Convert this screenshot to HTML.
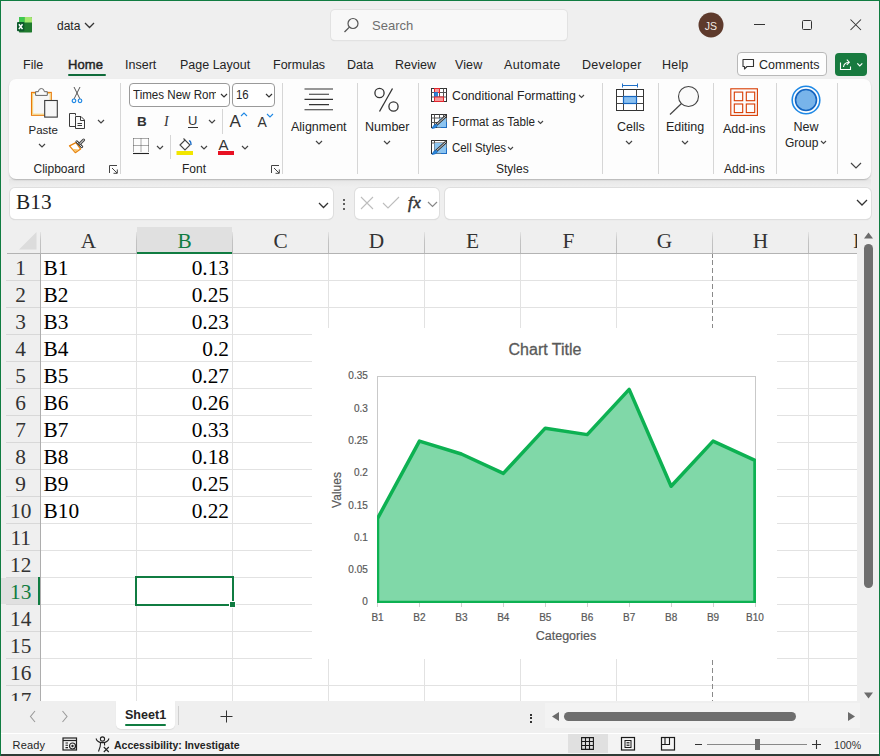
<!DOCTYPE html><html><head><meta charset="utf-8"><style>
html,body{margin:0;padding:0;}
body{width:880px;height:756px;overflow:hidden;position:relative;background:#efefef;font-family:"Liberation Sans",sans-serif;}
.t{position:absolute;white-space:nowrap;}
svg{overflow:visible}
</style></head><body>
<svg style="position:absolute;left:16px;top:16px;" width="18" height="18" viewBox="0 0 18 18">
<rect x="3" y="1" width="13" height="15.6" rx="1.2" fill="#1f7a2e"/>
<path d="M3 6.6 V2.2 Q3 1 4.2 1 H8.6 V6.6 Z" fill="#3ec94f"/>
<path d="M8.6 1 H14.8 Q16 1 16 2.2 V6.6 H8.6 Z" fill="#a6e871"/>
<path d="M3 1 h13 v5.6 h-13z" fill="none"/>
<rect x="1" y="6" width="7.4" height="9.3" rx="1" fill="#0e5a2d"/>
<path d="M2.9 8.3 L6.5 13.1 M6.5 8.3 L2.9 13.1" stroke="#fff" stroke-width="1.5"/>
</svg>
<div class="t" style="left:57px;top:20.44px;font-size:12px;line-height:13.80px;color:#242424;font-weight:400;font-family:'Liberation Sans', sans-serif;">data</div>
<svg style="position:absolute;left:83.5px;top:21.75px;" width="11" height="6.5" viewBox="0 0 11 6.5"><path d="M1 1 L5.5 5.5 L10 1" fill="none" stroke="#333" stroke-width="1.3"/></svg>
<div style="position:absolute;left:331px;top:10px;width:236px;height:30px;background:#f8f8f8;border-radius:4px;box-shadow:0 0 0 1px #e2e2e2, 0 1px 1px #d0d0d0;"></div>
<svg style="position:absolute;left:343px;top:17px;" width="17" height="17" viewBox="0 0 17 17"><circle cx="10" cy="6.5" r="5" fill="none" stroke="#555" stroke-width="1.2"/><path d="M6.4 10.1 L1.5 15" stroke="#555" stroke-width="1.3"/></svg>
<div class="t" style="left:372px;top:19.02px;font-size:13px;line-height:14.95px;color:#6e6e6e;font-weight:400;font-family:'Liberation Sans', sans-serif;">Search</div>
<svg style="position:absolute;left:698px;top:12px;" width="26" height="26" viewBox="0 0 26 26"><circle cx="13" cy="13" r="12.5" fill="#5e3a2c"/></svg>
<div class="t" style="left:411px;width:600px;text-align:center;top:20.32px;font-size:10.5px;line-height:12.07px;color:#f3ebe6;font-weight:400;font-family:'Liberation Sans', sans-serif;">JS</div>
<div style="position:absolute;left:754px;top:24px;width:11px;height:1px;background:#333"></div>
<div style="position:absolute;left:802px;top:20px;width:10px;height:10px;border:1px solid #333;box-sizing:border-box;border-radius:1.5px"></div>
<svg style="position:absolute;left:850px;top:19px;" width="12" height="12" viewBox="0 0 12 12"><path d="M0.5 0.5 L11 11 M11 0.5 L0.5 11" stroke="#333" stroke-width="1.05"/></svg>
<div class="t" style="left:23px;top:57.98px;font-size:12.5px;line-height:14.37px;color:#242424;font-weight:400;font-family:'Liberation Sans', sans-serif;letter-spacing:0px">File</div>
<div class="t" style="left:68px;top:57.52px;font-size:13px;line-height:14.95px;color:#242424;font-weight:400;font-family:'Liberation Sans', sans-serif;-webkit-text-stroke:0.45px #242424;letter-spacing:0.1px">Home</div>
<div class="t" style="left:125px;top:57.98px;font-size:12.5px;line-height:14.37px;color:#242424;font-weight:400;font-family:'Liberation Sans', sans-serif;letter-spacing:0px">Insert</div>
<div class="t" style="left:180px;top:57.98px;font-size:12.5px;line-height:14.37px;color:#242424;font-weight:400;font-family:'Liberation Sans', sans-serif;letter-spacing:0px">Page Layout</div>
<div class="t" style="left:273px;top:57.98px;font-size:12.5px;line-height:14.37px;color:#242424;font-weight:400;font-family:'Liberation Sans', sans-serif;letter-spacing:0px">Formulas</div>
<div class="t" style="left:347px;top:57.98px;font-size:12.5px;line-height:14.37px;color:#242424;font-weight:400;font-family:'Liberation Sans', sans-serif;letter-spacing:0px">Data</div>
<div class="t" style="left:395px;top:57.98px;font-size:12.5px;line-height:14.37px;color:#242424;font-weight:400;font-family:'Liberation Sans', sans-serif;letter-spacing:0px">Review</div>
<div class="t" style="left:455px;top:57.98px;font-size:12.5px;line-height:14.37px;color:#242424;font-weight:400;font-family:'Liberation Sans', sans-serif;letter-spacing:0.1px">View</div>
<div class="t" style="left:504px;top:57.98px;font-size:12.5px;line-height:14.37px;color:#242424;font-weight:400;font-family:'Liberation Sans', sans-serif;letter-spacing:0.4px">Automate</div>
<div class="t" style="left:582px;top:57.98px;font-size:12.5px;line-height:14.37px;color:#242424;font-weight:400;font-family:'Liberation Sans', sans-serif;letter-spacing:0.3px">Developer</div>
<div class="t" style="left:662px;top:57.98px;font-size:12.5px;line-height:14.37px;color:#242424;font-weight:400;font-family:'Liberation Sans', sans-serif;letter-spacing:0.2px">Help</div>
<div style="position:absolute;left:68px;top:74px;width:38px;height:2px;background:#0f6b3a;border-radius:1px"></div>
<div style="position:absolute;left:737px;top:52px;width:90px;height:24px;background:#fdfdfd;border:1px solid #b8b8b8;border-radius:4px;box-sizing:border-box"></div>
<svg style="position:absolute;left:742px;top:58px;" width="13" height="13" viewBox="0 0 13 13"><path d="M1 1.5 H11.5 V8.5 H5 L2.5 11 V8.5 H1 Z" fill="none" stroke="#333" stroke-width="1.1" stroke-linejoin="round"/></svg>
<div class="t" style="left:759px;top:57.98px;font-size:12.5px;line-height:14.37px;color:#242424;font-weight:400;font-family:'Liberation Sans', sans-serif;">Comments</div>
<div style="position:absolute;left:835px;top:53px;width:32px;height:23px;background:#187a3f;border-radius:4px"></div>
<svg style="position:absolute;left:839px;top:57px;" width="26" height="14" viewBox="0 0 26 14"><path d="M1.5 5.5 V12.5 H11.5 V9.5" fill="none" stroke="#fff" stroke-width="1.1"/><path d="M4.5 10 Q5 5.5 10 5.2" fill="none" stroke="#fff" stroke-width="1.1"/><path d="M7.8 2.6 L10.3 5.2 L7.8 7.8" fill="none" stroke="#fff" stroke-width="1.1"/><path d="M18.3 6.3 L20.8 8.8 L23.3 6.3" fill="none" stroke="#fff" stroke-width="1.2"/></svg>
<div style="position:absolute;left:9px;top:179px;width:862px;height:8px;background:linear-gradient(#e6e6e6,#efefef)"></div>
<div style="position:absolute;left:9px;top:79px;width:862px;height:100px;background:#fdfdfd;border-radius:7px;box-shadow:0 1px 1.5px rgba(0,0,0,0.22)"></div>
<div style="position:absolute;left:120px;top:83px;width:1px;height:91px;background:#d6d6d6"></div>
<div style="position:absolute;left:282px;top:83px;width:1px;height:91px;background:#d6d6d6"></div>
<div style="position:absolute;left:357px;top:83px;width:1px;height:91px;background:#d6d6d6"></div>
<div style="position:absolute;left:418px;top:83px;width:1px;height:91px;background:#d6d6d6"></div>
<div style="position:absolute;left:602px;top:83px;width:1px;height:91px;background:#d6d6d6"></div>
<div style="position:absolute;left:658px;top:83px;width:1px;height:91px;background:#d6d6d6"></div>
<div style="position:absolute;left:713px;top:83px;width:1px;height:91px;background:#d6d6d6"></div>
<div style="position:absolute;left:776px;top:83px;width:1px;height:91px;background:#d6d6d6"></div>
<div style="position:absolute;left:837px;top:83px;width:1px;height:91px;background:#d6d6d6"></div>
<svg style="position:absolute;left:30px;top:87px;" width="30" height="32" viewBox="0 0 30 32">
<rect x="1.5" y="5.4" width="19.8" height="22.9" fill="#f7f7f7" stroke="#e8780a" stroke-width="1.1"/>
<path d="M2.6 27.2 V6.5 H20.2 V13" fill="none" stroke="#f5d27a" stroke-width="1.1"/>
<path d="M2.6 27.2 H14" fill="none" stroke="#f5d27a" stroke-width="1.1"/>
<path d="M5.6 8.4 V4.7 H8.3 Q8.6 1.5 11.35 1.5 Q14.1 1.5 14.4 4.7 H17.3 V8.4 Z" fill="#fbfbfb" stroke="#666" stroke-width="1"/>
<rect x="14.7" y="13.5" width="12.6" height="16.6" fill="#f7f7f7" stroke="#3a3a3a" stroke-width="1.1"/>
</svg>
<div class="t" style="left:28.5px;top:123.90px;font-size:11.5px;line-height:13.22px;color:#242424;font-weight:400;font-family:'Liberation Sans', sans-serif;">Paste</div>
<svg style="position:absolute;left:37.5px;top:143.0px;" width="8" height="5" viewBox="0 0 8 5"><path d="M1 1 L4.0 4 L7 1" fill="none" stroke="#444" stroke-width="1.2"/></svg>
<svg style="position:absolute;left:70px;top:86px;" width="14" height="18" viewBox="0 0 14 18">
<path d="M4 13 L10 1 M10 13 L4 1" stroke="#555" stroke-width="1"/>
<circle cx="4" cy="14.8" r="1.8" fill="none" stroke="#1e88e5" stroke-width="1.2"/>
<circle cx="10" cy="14.8" r="1.8" fill="none" stroke="#1e88e5" stroke-width="1.2"/>
</svg>
<svg style="position:absolute;left:68px;top:111px;" width="19" height="19" viewBox="0 0 19 19">
<path d="M7.5 4.5 V2.5 H1.5 V15.5 H7" fill="none" stroke="#3a3a3a" stroke-width="1"/>
<path d="M7.5 5.5 H13 L16.5 9 V17.5 H7.5 Z" fill="#fafafa" stroke="#3a3a3a" stroke-width="1"/>
<path d="M12.5 5.5 V9.5 H16.5" fill="none" stroke="#3a3a3a" stroke-width="1"/>
<path d="M9.5 12.5 H14 M9.5 14.5 H14" stroke="#3a3a3a" stroke-width="1"/>
</svg>
<svg style="position:absolute;left:96.5px;top:119.0px;" width="8" height="5" viewBox="0 0 8 5"><path d="M1 1 L4.0 4 L7 1" fill="none" stroke="#444" stroke-width="1.2"/></svg>
<svg style="position:absolute;left:68px;top:138px;" width="18" height="17" viewBox="0 0 18 17">
<path d="M8 4.6 L1.5 7.8 L7.3 14.6 L12.6 11 Z" fill="#fff" stroke="#e8820c" stroke-width="1.3" stroke-linejoin="round"/>
<path d="M4.2 10.8 L7.4 14 L11 11.6 Z" fill="#f8c46a"/>
<path d="M8.8 3.8 L13.8 8.8" stroke="#444" stroke-width="2.8" stroke-linecap="round"/>
<path d="M8.8 3.8 L13.8 8.8" stroke="#fff" stroke-width="0.9" stroke-linecap="round"/>
<path d="M11.8 5.8 L15.6 2" stroke="#444" stroke-width="3" stroke-linecap="round"/>
<path d="M11.8 5.8 L15.6 2" stroke="#fff" stroke-width="1" stroke-linecap="round"/>
</svg>
<div class="t" style="left:33.5px;top:162.94px;font-size:12px;line-height:13.80px;color:#242424;font-weight:400;font-family:'Liberation Sans', sans-serif;">Clipboard</div>
<svg style="position:absolute;left:109px;top:165px;" width="9" height="9" viewBox="0 0 9 9"><path d="M0.5 0.5 H8.5 V8.5 H0.5 Z" fill="none" stroke="#555" stroke-width="0"/><path d="M0.5 8 V0.5 H8" fill="none" stroke="#444" stroke-width="1"/><path d="M3 3 L8 8 M4.5 8.3 H8.3 V4.5" fill="none" stroke="#444" stroke-width="1"/></svg>
<div style="position:absolute;left:129px;top:83px;width:101px;height:24px;background:#fff;border:1px solid #9a9a9a;border-radius:4px;box-sizing:border-box"></div>
<div class="t" style="left:133px;top:89.44px;font-size:12px;line-height:13.80px;color:#242424;font-weight:400;font-family:'Liberation Sans', sans-serif;width:86px;overflow:hidden;transform:scaleX(0.965);transform-origin:0 0;">Times New Roman</div>
<svg style="position:absolute;left:219.5px;top:93.0px;" width="8" height="5" viewBox="0 0 8 5"><path d="M1 1 L4.0 4 L7 1" fill="none" stroke="#333" stroke-width="1.2"/></svg>
<div style="position:absolute;left:232px;top:83px;width:43px;height:24px;background:#fff;border:1px solid #9a9a9a;border-radius:4px;box-sizing:border-box"></div>
<div class="t" style="left:235.5px;top:89.44px;font-size:12px;line-height:13.80px;color:#242424;font-weight:400;font-family:'Liberation Sans', sans-serif;transform:scaleX(0.95);transform-origin:0 0;">16</div>
<svg style="position:absolute;left:264.5px;top:93.0px;" width="8" height="5" viewBox="0 0 8 5"><path d="M1 1 L4.0 4 L7 1" fill="none" stroke="#333" stroke-width="1.2"/></svg>
<div class="t" style="left:137px;top:114.06px;font-size:13.5px;line-height:15.52px;color:#333;font-weight:700;font-family:'Liberation Sans', sans-serif;">B</div>
<div class="t" style="left:164px;top:113.72px;font-size:14px;line-height:16.10px;color:#333;font-weight:400;font-family:'Liberation Serif', serif;font-style:italic">I</div>
<div class="t" style="left:188px;top:113.52px;font-size:13px;line-height:14.95px;color:#333;font-weight:400;font-family:'Liberation Sans', sans-serif;">U</div>
<div style="position:absolute;left:187.5px;top:127px;width:10px;height:1px;background:#333"></div>
<svg style="position:absolute;left:207.5px;top:118.5px;" width="8" height="5" viewBox="0 0 8 5"><path d="M1 1 L4.0 4 L7 1" fill="none" stroke="#444" stroke-width="1.2"/></svg>
<div style="position:absolute;left:222px;top:109px;width:1px;height:25px;background:#d6d6d6"></div>
<div class="t" style="left:229.5px;top:111.83px;font-size:17px;line-height:19.55px;color:#333;font-weight:400;font-family:'Liberation Sans', sans-serif;">A</div>
<svg style="position:absolute;left:240px;top:112px;" width="8" height="5" viewBox="0 0 8 5"><path d="M1 4 L4 1 L7 4" fill="none" stroke="#1e88e5" stroke-width="1.1"/></svg>
<div class="t" style="left:257.5px;top:113.60px;font-size:14px;line-height:16.10px;color:#333;font-weight:400;font-family:'Liberation Sans', sans-serif;">A</div>
<svg style="position:absolute;left:266px;top:113px;" width="8" height="5" viewBox="0 0 8 5"><path d="M1 1 L4 4 L7 1" fill="none" stroke="#1e88e5" stroke-width="1.1"/></svg>
<svg style="position:absolute;left:132px;top:137px;" width="18" height="18" viewBox="0 0 18 18">
<path d="M1.5 1.5 H16.5 M1.5 1.5 V15 M16.5 1.5 V15 M9 1.5 V15 M1.5 8.5 H16.5" fill="none" stroke="#555" stroke-width="1" stroke-dasharray="1 1"/>
<path d="M1 16.5 H17" stroke="#222" stroke-width="1.1"/>
</svg>
<svg style="position:absolute;left:155.5px;top:145.0px;" width="8" height="5" viewBox="0 0 8 5"><path d="M1 1 L4.0 4 L7 1" fill="none" stroke="#444" stroke-width="1.2"/></svg>
<div style="position:absolute;left:170px;top:135px;width:1px;height:24px;background:#d6d6d6"></div>
<svg style="position:absolute;left:176px;top:137px;" width="19" height="19" viewBox="0 0 19 19">
<path d="M4 8 L9 3 L14 8 L9 13 Z" fill="none" stroke="#444" stroke-width="1.1"/>
<path d="M9 3 L7.5 1.5" stroke="#444" stroke-width="1.1"/>
<path d="M13 4 Q15 3.5 15 8" fill="none" stroke="#1e6fc8" stroke-width="1.4"/>
<rect x="0.5" y="14" width="16.5" height="4" fill="#f2e600"/>
</svg>
<svg style="position:absolute;left:199.5px;top:145.0px;" width="8" height="5" viewBox="0 0 8 5"><path d="M1 1 L4.0 4 L7 1" fill="none" stroke="#444" stroke-width="1.2"/></svg>
<div class="t" style="left:218.5px;top:136.18px;font-size:15px;line-height:17.25px;color:#333;font-weight:400;font-family:'Liberation Sans', sans-serif;">A</div>
<div style="position:absolute;left:218px;top:151px;width:16px;height:4px;background:#e81123"></div>
<svg style="position:absolute;left:240.5px;top:145.0px;" width="8" height="5" viewBox="0 0 8 5"><path d="M1 1 L4.0 4 L7 1" fill="none" stroke="#444" stroke-width="1.2"/></svg>
<div class="t" style="left:182px;top:162.94px;font-size:12px;line-height:13.80px;color:#242424;font-weight:400;font-family:'Liberation Sans', sans-serif;">Font</div>
<svg style="position:absolute;left:271px;top:165px;" width="9" height="9" viewBox="0 0 9 9"><path d="M0.5 8 V0.5 H8" fill="none" stroke="#444" stroke-width="1"/><path d="M3 3 L8 8 M4.5 8.3 H8.3 V4.5" fill="none" stroke="#444" stroke-width="1"/></svg>
<svg style="position:absolute;left:304px;top:88px;" width="30" height="23" viewBox="0 0 30 23">
<path d="M0.5 1 H29 M5 6.2 H25 M0.5 11.4 H29 M5 16.6 H25 M0.5 21.8 H29" stroke="#333" stroke-width="1.1"/>
</svg>
<div class="t" style="left:291px;top:120.48px;font-size:12.5px;line-height:14.37px;color:#242424;font-weight:400;font-family:'Liberation Sans', sans-serif;">Alignment</div>
<svg style="position:absolute;left:314.5px;top:140.0px;" width="8" height="5" viewBox="0 0 8 5"><path d="M1 1 L4.0 4 L7 1" fill="none" stroke="#444" stroke-width="1.2"/></svg>
<svg style="position:absolute;left:373px;top:87px;" width="28" height="27" viewBox="0 0 28 27">
<circle cx="6.5" cy="6" r="4.6" fill="none" stroke="#333" stroke-width="1.3"/>
<circle cx="20.5" cy="19.5" r="4.6" fill="none" stroke="#333" stroke-width="1.3"/>
<path d="M19.5 1.5 L6.5 24.5" stroke="#333" stroke-width="1.3"/>
</svg>
<div class="t" style="left:365px;top:120.48px;font-size:12.5px;line-height:14.37px;color:#242424;font-weight:400;font-family:'Liberation Sans', sans-serif;">Number</div>
<svg style="position:absolute;left:382.5px;top:140.0px;" width="8" height="5" viewBox="0 0 8 5"><path d="M1 1 L4.0 4 L7 1" fill="none" stroke="#444" stroke-width="1.2"/></svg>
<svg style="position:absolute;left:430px;top:87px;" width="18" height="16" viewBox="0 0 18 16">
<rect x="1.5" y="1.5" width="15" height="13" fill="#fff" stroke="#333" stroke-width="1"/>
<path d="M4.5 1.5 V14.5 M9.5 1.5 V14.5 M13.5 1.5 V14.5 M1.5 5.5 H16.5 M1.5 10 H16.5" stroke="#555" stroke-width="1"/>
<rect x="4.5" y="1.5" width="5" height="4" fill="#f49a9a" stroke="#e3262e" stroke-width="1"/>
<rect x="4.5" y="5.5" width="3" height="4.5" fill="#2b88d8" stroke="#1e6fc8" stroke-width="0.8"/>
<rect x="4.5" y="10" width="9" height="4.5" fill="#f49a9a" stroke="#e3262e" stroke-width="1"/>
</svg>
<div class="t" style="left:451.5px;top:90.24px;font-size:12px;line-height:13.80px;color:#242424;font-weight:400;font-family:'Liberation Sans', sans-serif;transform:scaleX(1.025);transform-origin:0 0;">Conditional Formatting</div>
<svg style="position:absolute;left:577.5px;top:93.75px;" width="7" height="4.5" viewBox="0 0 7 4.5"><path d="M1 1 L3.5 3.5 L6 1" fill="none" stroke="#444" stroke-width="1.1"/></svg>
<svg style="position:absolute;left:430px;top:113px;" width="18" height="16" viewBox="0 0 18 16">
<rect x="1.5" y="1.5" width="15" height="13" fill="#fff" stroke="#333" stroke-width="1"/>
<path d="M1.5 5 H16.5 M1.5 9.5 H9 M4.5 1.5 V14.5 M9.5 1.5 V9 M13.5 1.5 V5" stroke="#555" stroke-width="1"/>
<path d="M9.5 5 H16.5 V14.5 H7 Z" fill="#8cc4f0" stroke="none"/>
<path d="M16.5 9 V14.5 H11" fill="none" stroke="#1e6fc8" stroke-width="1"/>
<path d="M5.5 12.5 L15.5 3.5" stroke="#333" stroke-width="2.6" stroke-linecap="round"/>
<path d="M5.5 12.5 L15.5 3.5" stroke="#fff" stroke-width="0.8" stroke-linecap="round"/>
<path d="M2 15.5 Q3.5 11 6.5 11.5 L7.5 12.5 Q7 15 2 15.5 Z" fill="#2b88d8" stroke="#1e6fc8" stroke-width="0.8"/>
</svg>
<div class="t" style="left:451.5px;top:116.24px;font-size:12px;line-height:13.80px;color:#242424;font-weight:400;font-family:'Liberation Sans', sans-serif;transform:scaleX(0.968);transform-origin:0 0;">Format as Table</div>
<svg style="position:absolute;left:536.5px;top:119.75px;" width="7" height="4.5" viewBox="0 0 7 4.5"><path d="M1 1 L3.5 3.5 L6 1" fill="none" stroke="#444" stroke-width="1.1"/></svg>
<svg style="position:absolute;left:430px;top:139px;" width="18" height="16" viewBox="0 0 18 16">
<rect x="1.5" y="1.5" width="15" height="13" fill="#fff" stroke="#333" stroke-width="1"/>
<path d="M1.5 4 H16.5 M4.5 1.5 V14.5" stroke="#555" stroke-width="1"/>
<path d="M4.5 4 H16.5 V14.5 H4.5 Z" fill="#8cc4f0" stroke="none"/>
<path d="M16.5 9 V14.5 H11" fill="none" stroke="#1e6fc8" stroke-width="1"/>
<path d="M5.5 12.5 L15.5 3.5" stroke="#333" stroke-width="2.6" stroke-linecap="round"/>
<path d="M5.5 12.5 L15.5 3.5" stroke="#fff" stroke-width="0.8" stroke-linecap="round"/>
<path d="M2 15.5 Q3.5 11 6.5 11.5 L7.5 12.5 Q7 15 2 15.5 Z" fill="#2b88d8" stroke="#1e6fc8" stroke-width="0.8"/>
</svg>
<div class="t" style="left:451.5px;top:142.04px;font-size:12px;line-height:13.80px;color:#242424;font-weight:400;font-family:'Liberation Sans', sans-serif;transform:scaleX(0.953);transform-origin:0 0;">Cell Styles</div>
<svg style="position:absolute;left:507.3px;top:145.55px;" width="7" height="4.5" viewBox="0 0 7 4.5"><path d="M1 1 L3.5 3.5 L6 1" fill="none" stroke="#444" stroke-width="1.1"/></svg>
<div class="t" style="left:496px;top:162.94px;font-size:12px;line-height:13.80px;color:#242424;font-weight:400;font-family:'Liberation Sans', sans-serif;">Styles</div>
<svg style="position:absolute;left:615px;top:83px;" width="30" height="29" viewBox="0 0 30 29">
<path d="M7.5 2.5 H22.5 M7.5 0.5 V4.5 M22.5 0.5 V4.5" stroke="#1e6fc8" stroke-width="1"/>
<rect x="1.5" y="6.5" width="27" height="21" fill="#fff" stroke="#333" stroke-width="1"/>
<path d="M8.5 6.5 V27.5 M21.5 6.5 V27.5 M1.5 13.5 H28.5 M1.5 20.5 H28.5" stroke="#444" stroke-width="1"/>
<rect x="8.5" y="13.5" width="13" height="7" fill="#8ac0f0" stroke="#1565c0" stroke-width="1.2"/>
</svg>
<div class="t" style="left:617px;top:120.48px;font-size:12.5px;line-height:14.37px;color:#242424;font-weight:400;font-family:'Liberation Sans', sans-serif;">Cells</div>
<svg style="position:absolute;left:625.0px;top:140.0px;" width="8" height="5" viewBox="0 0 8 5"><path d="M1 1 L4.0 4 L7 1" fill="none" stroke="#444" stroke-width="1.2"/></svg>
<svg style="position:absolute;left:668px;top:84px;" width="34" height="32" viewBox="0 0 34 32">
<circle cx="20.5" cy="12.5" r="10" fill="#fafafa" stroke="#444" stroke-width="1.1"/>
<path d="M13.5 19.5 L2 30.5" stroke="#444" stroke-width="1.2"/>
</svg>
<div class="t" style="left:666px;top:120.48px;font-size:12.5px;line-height:14.37px;color:#242424;font-weight:400;font-family:'Liberation Sans', sans-serif;">Editing</div>
<svg style="position:absolute;left:680.5px;top:140.0px;" width="8" height="5" viewBox="0 0 8 5"><path d="M1 1 L4.0 4 L7 1" fill="none" stroke="#444" stroke-width="1.2"/></svg>
<svg style="position:absolute;left:729px;top:87px;" width="30" height="30" viewBox="0 0 30 30">
<rect x="1.8" y="1.8" width="26.6" height="26.6" fill="none" stroke="#d83b01" stroke-width="1.1"/>
<rect x="5.3" y="5.1" width="8.4" height="8.6" fill="none" stroke="#d83b01" stroke-width="1.1"/>
<rect x="17.3" y="5.1" width="8.4" height="8.6" fill="none" stroke="#d83b01" stroke-width="1.1"/>
<rect x="5.3" y="17" width="8.4" height="8.6" fill="none" stroke="#d83b01" stroke-width="1.1"/>
<rect x="17.3" y="17" width="8.4" height="8.6" fill="none" stroke="#d83b01" stroke-width="1.1"/>
</svg>
<div class="t" style="left:723px;top:121.98px;font-size:12.5px;line-height:14.37px;color:#242424;font-weight:400;font-family:'Liberation Sans', sans-serif;">Add-ins</div>
<div class="t" style="left:724px;top:162.94px;font-size:12px;line-height:13.80px;color:#242424;font-weight:400;font-family:'Liberation Sans', sans-serif;">Add-ins</div>
<svg style="position:absolute;left:790px;top:84px;" width="32" height="32" viewBox="0 0 32 32">
<circle cx="16" cy="16" r="13.8" fill="#fff" stroke="#1e88e5" stroke-width="1.6"/>
<circle cx="16" cy="16" r="10.5" fill="#78b4ea" stroke="#1565c0" stroke-width="1.6"/>
</svg>
<div class="t" style="left:506px;width:600px;text-align:center;top:120.48px;font-size:12.5px;line-height:14.37px;color:#242424;font-weight:400;font-family:'Liberation Sans', sans-serif;">New</div>
<div class="t" style="left:785px;top:136.94px;font-size:12px;line-height:13.80px;color:#242424;font-weight:400;font-family:'Liberation Sans', sans-serif;">Group</div>
<svg style="position:absolute;left:819.5px;top:140.25px;" width="7" height="4.5" viewBox="0 0 7 4.5"><path d="M1 1 L3.5 3.5 L6 1" fill="none" stroke="#444" stroke-width="1.1"/></svg>
<svg style="position:absolute;left:850.0px;top:161.5px;" width="12" height="7" viewBox="0 0 12 7"><path d="M1 1 L6.0 6 L11 1" fill="none" stroke="#444" stroke-width="1.2"/></svg>
<div style="position:absolute;left:10px;top:188px;width:323px;height:31px;background:#fff;border-radius:5px;box-shadow:0 0 0 1px #dedede, 0 1px 1px #cfcfcf"></div>
<div class="t" style="left:16px;top:189.54px;font-size:21.33px;line-height:24.53px;color:#242424;font-weight:400;font-family:'Liberation Serif', serif;">B13</div>
<svg style="position:absolute;left:317.5px;top:201.75px;" width="11" height="6.5" viewBox="0 0 11 6.5"><path d="M1 1 L5.5 5.5 L10 1" fill="none" stroke="#333" stroke-width="1.3"/></svg>
<div style="position:absolute;left:342.5px;top:198.5px;width:2px;height:2px;background:#333;border-radius:1px"></div>
<div style="position:absolute;left:342.5px;top:203px;width:2px;height:2px;background:#333;border-radius:1px"></div>
<div style="position:absolute;left:342.5px;top:207.5px;width:2px;height:2px;background:#333;border-radius:1px"></div>
<div style="position:absolute;left:355px;top:188px;width:84px;height:31px;background:#fff;border-radius:5px;box-shadow:0 0 0 1px #dedede, 0 1px 1px #cfcfcf"></div>
<svg style="position:absolute;left:360px;top:196px;" width="14" height="14" viewBox="0 0 14 14"><path d="M1 1 L13 13 M13 1 L1 13" stroke="#bdbdbd" stroke-width="1.1"/></svg>
<svg style="position:absolute;left:382px;top:196px;" width="18" height="14" viewBox="0 0 18 14"><path d="M1 7 L6 12 L17 1" fill="none" stroke="#bdbdbd" stroke-width="1.1"/></svg>
<div class="t" style="left:408px;top:193.49px;font-size:17px;line-height:19.55px;color:#333;font-weight:400;font-family:'Liberation Serif', serif;font-style:italic;letter-spacing:0.5px;-webkit-text-stroke:0.5px #333">fx</div>
<svg style="position:absolute;left:426.5px;top:200.75px;" width="11" height="6.5" viewBox="0 0 11 6.5"><path d="M1 1 L5.5 5.5 L10 1" fill="none" stroke="#888" stroke-width="1.2"/></svg>
<div style="position:absolute;left:445px;top:188px;width:426px;height:31px;background:#fff;border-radius:5px;box-shadow:0 0 0 1px #dedede, 0 1px 1px #cfcfcf"></div>
<svg style="position:absolute;left:855.5px;top:199.0px;" width="12" height="7" viewBox="0 0 12 7"><path d="M1 1 L6.0 6 L11 1" fill="none" stroke="#333" stroke-width="1.3"/></svg>
<div style="position:absolute;left:1px;top:227px;width:856px;height:26px;background:#efefef"></div>
<div style="position:absolute;left:41px;top:254px;width:816px;height:447px;background:#fff"></div>
<svg style="position:absolute;left:18px;top:231px;" width="20" height="20" viewBox="0 0 20 20"><path d="M1 18.5 L18.5 18.5 L18.5 1 Z" fill="#dcdcdc"/></svg>
<div style="position:absolute;left:137px;top:227px;width:95px;height:26px;background:#e0e0e0"></div>
<div style="position:absolute;left:40px;top:232px;width:1px;height:21px;background:linear-gradient(#e4e4e4,#c4c4c4 40%,#bdbdbd)"></div>
<div style="position:absolute;left:40px;top:253px;width:1px;height:448px;background:#adadad"></div>
<div style="position:absolute;left:136px;top:232px;width:1px;height:21px;background:linear-gradient(#e4e4e4,#c4c4c4 40%,#bdbdbd)"></div>
<div style="position:absolute;left:136px;top:254px;width:1px;height:447px;background:#e2e2e2"></div>
<div style="position:absolute;left:232px;top:232px;width:1px;height:21px;background:linear-gradient(#e4e4e4,#c4c4c4 40%,#bdbdbd)"></div>
<div style="position:absolute;left:232px;top:254px;width:1px;height:447px;background:#e2e2e2"></div>
<div style="position:absolute;left:328px;top:232px;width:1px;height:21px;background:linear-gradient(#e4e4e4,#c4c4c4 40%,#bdbdbd)"></div>
<div style="position:absolute;left:328px;top:254px;width:1px;height:447px;background:#e2e2e2"></div>
<div style="position:absolute;left:424px;top:232px;width:1px;height:21px;background:linear-gradient(#e4e4e4,#c4c4c4 40%,#bdbdbd)"></div>
<div style="position:absolute;left:424px;top:254px;width:1px;height:447px;background:#e2e2e2"></div>
<div style="position:absolute;left:520px;top:232px;width:1px;height:21px;background:linear-gradient(#e4e4e4,#c4c4c4 40%,#bdbdbd)"></div>
<div style="position:absolute;left:520px;top:254px;width:1px;height:447px;background:#e2e2e2"></div>
<div style="position:absolute;left:616px;top:232px;width:1px;height:21px;background:linear-gradient(#e4e4e4,#c4c4c4 40%,#bdbdbd)"></div>
<div style="position:absolute;left:616px;top:254px;width:1px;height:447px;background:#e2e2e2"></div>
<div style="position:absolute;left:712px;top:232px;width:1px;height:21px;background:linear-gradient(#e4e4e4,#c4c4c4 40%,#bdbdbd)"></div>
<div style="position:absolute;left:808px;top:232px;width:1px;height:21px;background:linear-gradient(#e4e4e4,#c4c4c4 40%,#bdbdbd)"></div>
<div style="position:absolute;left:808px;top:254px;width:1px;height:447px;background:#e2e2e2"></div>
<div style="position:absolute;left:7px;top:253px;width:850px;height:1px;background:#b3b3b3"></div>
<div style="position:absolute;left:137px;top:252px;width:95px;height:2px;background:#107c41"></div>
<div style="position:absolute;left:41px;top:280px;width:816px;height:1px;background:#e2e2e2"></div>
<div style="position:absolute;left:6px;top:280px;width:34px;height:1px;background:#d8d8d8"></div>
<div style="position:absolute;left:41px;top:307px;width:816px;height:1px;background:#e2e2e2"></div>
<div style="position:absolute;left:6px;top:307px;width:34px;height:1px;background:#d8d8d8"></div>
<div style="position:absolute;left:41px;top:334px;width:816px;height:1px;background:#e2e2e2"></div>
<div style="position:absolute;left:6px;top:334px;width:34px;height:1px;background:#d8d8d8"></div>
<div style="position:absolute;left:41px;top:361px;width:816px;height:1px;background:#e2e2e2"></div>
<div style="position:absolute;left:6px;top:361px;width:34px;height:1px;background:#d8d8d8"></div>
<div style="position:absolute;left:41px;top:388px;width:816px;height:1px;background:#e2e2e2"></div>
<div style="position:absolute;left:6px;top:388px;width:34px;height:1px;background:#d8d8d8"></div>
<div style="position:absolute;left:41px;top:415px;width:816px;height:1px;background:#e2e2e2"></div>
<div style="position:absolute;left:6px;top:415px;width:34px;height:1px;background:#d8d8d8"></div>
<div style="position:absolute;left:41px;top:442px;width:816px;height:1px;background:#e2e2e2"></div>
<div style="position:absolute;left:6px;top:442px;width:34px;height:1px;background:#d8d8d8"></div>
<div style="position:absolute;left:41px;top:469px;width:816px;height:1px;background:#e2e2e2"></div>
<div style="position:absolute;left:6px;top:469px;width:34px;height:1px;background:#d8d8d8"></div>
<div style="position:absolute;left:41px;top:496px;width:816px;height:1px;background:#e2e2e2"></div>
<div style="position:absolute;left:6px;top:496px;width:34px;height:1px;background:#d8d8d8"></div>
<div style="position:absolute;left:41px;top:523px;width:816px;height:1px;background:#e2e2e2"></div>
<div style="position:absolute;left:6px;top:523px;width:34px;height:1px;background:#d8d8d8"></div>
<div style="position:absolute;left:41px;top:550px;width:816px;height:1px;background:#e2e2e2"></div>
<div style="position:absolute;left:6px;top:550px;width:34px;height:1px;background:#d8d8d8"></div>
<div style="position:absolute;left:41px;top:577px;width:816px;height:1px;background:#e2e2e2"></div>
<div style="position:absolute;left:6px;top:577px;width:34px;height:1px;background:#d8d8d8"></div>
<div style="position:absolute;left:41px;top:604px;width:816px;height:1px;background:#e2e2e2"></div>
<div style="position:absolute;left:6px;top:604px;width:34px;height:1px;background:#d8d8d8"></div>
<div style="position:absolute;left:41px;top:631px;width:816px;height:1px;background:#e2e2e2"></div>
<div style="position:absolute;left:6px;top:631px;width:34px;height:1px;background:#d8d8d8"></div>
<div style="position:absolute;left:41px;top:658px;width:816px;height:1px;background:#e2e2e2"></div>
<div style="position:absolute;left:6px;top:658px;width:34px;height:1px;background:#d8d8d8"></div>
<div style="position:absolute;left:41px;top:685px;width:816px;height:1px;background:#e2e2e2"></div>
<div style="position:absolute;left:6px;top:685px;width:34px;height:1px;background:#d8d8d8"></div>
<div style="position:absolute;left:1px;top:578px;width:39px;height:26px;background:#e0e0e0"></div>
<div style="position:absolute;left:38px;top:577px;width:2px;height:28px;background:#107c41"></div>
<div style="position:absolute;left:712px;top:254px;width:1px;height:447px;background:repeating-linear-gradient(to bottom,#8a8a8a 0 5px,transparent 5px 8px);background-position:0 6px"></div>
<div class="t" style="left:-211.5px;width:600px;text-align:center;top:228.54px;font-size:21.33px;line-height:24.53px;color:#333;font-weight:400;font-family:'Liberation Serif', serif;">A</div>
<div class="t" style="left:-115.5px;width:600px;text-align:center;top:228.54px;font-size:21.33px;line-height:24.53px;color:#107c41;font-weight:400;font-family:'Liberation Serif', serif;">B</div>
<div class="t" style="left:-19.5px;width:600px;text-align:center;top:228.54px;font-size:21.33px;line-height:24.53px;color:#333;font-weight:400;font-family:'Liberation Serif', serif;">C</div>
<div class="t" style="left:76.5px;width:600px;text-align:center;top:228.54px;font-size:21.33px;line-height:24.53px;color:#333;font-weight:400;font-family:'Liberation Serif', serif;">D</div>
<div class="t" style="left:172.5px;width:600px;text-align:center;top:228.54px;font-size:21.33px;line-height:24.53px;color:#333;font-weight:400;font-family:'Liberation Serif', serif;">E</div>
<div class="t" style="left:268.5px;width:600px;text-align:center;top:228.54px;font-size:21.33px;line-height:24.53px;color:#333;font-weight:400;font-family:'Liberation Serif', serif;">F</div>
<div class="t" style="left:364.5px;width:600px;text-align:center;top:228.54px;font-size:21.33px;line-height:24.53px;color:#333;font-weight:400;font-family:'Liberation Serif', serif;">G</div>
<div class="t" style="left:460.5px;width:600px;text-align:center;top:228.54px;font-size:21.33px;line-height:24.53px;color:#333;font-weight:400;font-family:'Liberation Serif', serif;">H</div>
<div class="t" style="left:556.5px;width:600px;text-align:center;top:228.54px;font-size:21.33px;line-height:24.53px;color:#333;font-weight:400;font-family:'Liberation Serif', serif;">I</div>
<div class="t" style="left:-279.3px;width:600px;text-align:center;top:256.34px;font-size:21.33px;line-height:24.53px;color:#333;font-weight:400;font-family:'Liberation Serif', serif;">1</div>
<div class="t" style="left:-279.3px;width:600px;text-align:center;top:283.34px;font-size:21.33px;line-height:24.53px;color:#333;font-weight:400;font-family:'Liberation Serif', serif;">2</div>
<div class="t" style="left:-279.3px;width:600px;text-align:center;top:310.34px;font-size:21.33px;line-height:24.53px;color:#333;font-weight:400;font-family:'Liberation Serif', serif;">3</div>
<div class="t" style="left:-279.3px;width:600px;text-align:center;top:337.34px;font-size:21.33px;line-height:24.53px;color:#333;font-weight:400;font-family:'Liberation Serif', serif;">4</div>
<div class="t" style="left:-279.3px;width:600px;text-align:center;top:364.34px;font-size:21.33px;line-height:24.53px;color:#333;font-weight:400;font-family:'Liberation Serif', serif;">5</div>
<div class="t" style="left:-279.3px;width:600px;text-align:center;top:391.34px;font-size:21.33px;line-height:24.53px;color:#333;font-weight:400;font-family:'Liberation Serif', serif;">6</div>
<div class="t" style="left:-279.3px;width:600px;text-align:center;top:418.34px;font-size:21.33px;line-height:24.53px;color:#333;font-weight:400;font-family:'Liberation Serif', serif;">7</div>
<div class="t" style="left:-279.3px;width:600px;text-align:center;top:445.34px;font-size:21.33px;line-height:24.53px;color:#333;font-weight:400;font-family:'Liberation Serif', serif;">8</div>
<div class="t" style="left:-279.3px;width:600px;text-align:center;top:472.34px;font-size:21.33px;line-height:24.53px;color:#333;font-weight:400;font-family:'Liberation Serif', serif;">9</div>
<div class="t" style="left:-279.3px;width:600px;text-align:center;top:499.34px;font-size:21.33px;line-height:24.53px;color:#333;font-weight:400;font-family:'Liberation Serif', serif;">10</div>
<div class="t" style="left:-279.3px;width:600px;text-align:center;top:526.34px;font-size:21.33px;line-height:24.53px;color:#333;font-weight:400;font-family:'Liberation Serif', serif;">11</div>
<div class="t" style="left:-279.3px;width:600px;text-align:center;top:553.34px;font-size:21.33px;line-height:24.53px;color:#333;font-weight:400;font-family:'Liberation Serif', serif;">12</div>
<div class="t" style="left:-279.3px;width:600px;text-align:center;top:580.34px;font-size:21.33px;line-height:24.53px;color:#107c41;font-weight:400;font-family:'Liberation Serif', serif;">13</div>
<div class="t" style="left:-279.3px;width:600px;text-align:center;top:607.34px;font-size:21.33px;line-height:24.53px;color:#333;font-weight:400;font-family:'Liberation Serif', serif;">14</div>
<div class="t" style="left:-279.3px;width:600px;text-align:center;top:634.34px;font-size:21.33px;line-height:24.53px;color:#333;font-weight:400;font-family:'Liberation Serif', serif;">15</div>
<div class="t" style="left:-279.3px;width:600px;text-align:center;top:661.34px;font-size:21.33px;line-height:24.53px;color:#333;font-weight:400;font-family:'Liberation Serif', serif;">16</div>
<div class="t" style="left:-279.3px;width:600px;text-align:center;top:688.34px;font-size:21.33px;line-height:24.53px;color:#333;font-weight:400;font-family:'Liberation Serif', serif;">17</div>
<div class="t" style="left:43.5px;top:256.34px;font-size:21.33px;line-height:24.53px;color:#000;font-weight:400;font-family:'Liberation Serif', serif;">B1</div>
<div class="t" style="left:-371px;width:600px;text-align:right;top:256.34px;font-size:21.33px;line-height:24.53px;color:#000;font-weight:400;font-family:'Liberation Serif', serif;">0.13</div>
<div class="t" style="left:43.5px;top:283.34px;font-size:21.33px;line-height:24.53px;color:#000;font-weight:400;font-family:'Liberation Serif', serif;">B2</div>
<div class="t" style="left:-371px;width:600px;text-align:right;top:283.34px;font-size:21.33px;line-height:24.53px;color:#000;font-weight:400;font-family:'Liberation Serif', serif;">0.25</div>
<div class="t" style="left:43.5px;top:310.34px;font-size:21.33px;line-height:24.53px;color:#000;font-weight:400;font-family:'Liberation Serif', serif;">B3</div>
<div class="t" style="left:-371px;width:600px;text-align:right;top:310.34px;font-size:21.33px;line-height:24.53px;color:#000;font-weight:400;font-family:'Liberation Serif', serif;">0.23</div>
<div class="t" style="left:43.5px;top:337.34px;font-size:21.33px;line-height:24.53px;color:#000;font-weight:400;font-family:'Liberation Serif', serif;">B4</div>
<div class="t" style="left:-371px;width:600px;text-align:right;top:337.34px;font-size:21.33px;line-height:24.53px;color:#000;font-weight:400;font-family:'Liberation Serif', serif;">0.2</div>
<div class="t" style="left:43.5px;top:364.34px;font-size:21.33px;line-height:24.53px;color:#000;font-weight:400;font-family:'Liberation Serif', serif;">B5</div>
<div class="t" style="left:-371px;width:600px;text-align:right;top:364.34px;font-size:21.33px;line-height:24.53px;color:#000;font-weight:400;font-family:'Liberation Serif', serif;">0.27</div>
<div class="t" style="left:43.5px;top:391.34px;font-size:21.33px;line-height:24.53px;color:#000;font-weight:400;font-family:'Liberation Serif', serif;">B6</div>
<div class="t" style="left:-371px;width:600px;text-align:right;top:391.34px;font-size:21.33px;line-height:24.53px;color:#000;font-weight:400;font-family:'Liberation Serif', serif;">0.26</div>
<div class="t" style="left:43.5px;top:418.34px;font-size:21.33px;line-height:24.53px;color:#000;font-weight:400;font-family:'Liberation Serif', serif;">B7</div>
<div class="t" style="left:-371px;width:600px;text-align:right;top:418.34px;font-size:21.33px;line-height:24.53px;color:#000;font-weight:400;font-family:'Liberation Serif', serif;">0.33</div>
<div class="t" style="left:43.5px;top:445.34px;font-size:21.33px;line-height:24.53px;color:#000;font-weight:400;font-family:'Liberation Serif', serif;">B8</div>
<div class="t" style="left:-371px;width:600px;text-align:right;top:445.34px;font-size:21.33px;line-height:24.53px;color:#000;font-weight:400;font-family:'Liberation Serif', serif;">0.18</div>
<div class="t" style="left:43.5px;top:472.34px;font-size:21.33px;line-height:24.53px;color:#000;font-weight:400;font-family:'Liberation Serif', serif;">B9</div>
<div class="t" style="left:-371px;width:600px;text-align:right;top:472.34px;font-size:21.33px;line-height:24.53px;color:#000;font-weight:400;font-family:'Liberation Serif', serif;">0.25</div>
<div class="t" style="left:43.5px;top:499.34px;font-size:21.33px;line-height:24.53px;color:#000;font-weight:400;font-family:'Liberation Serif', serif;">B10</div>
<div class="t" style="left:-371px;width:600px;text-align:right;top:499.34px;font-size:21.33px;line-height:24.53px;color:#000;font-weight:400;font-family:'Liberation Serif', serif;">0.22</div>
<div style="position:absolute;left:135px;top:576px;width:99px;height:30px;border:2px solid #107c41;box-sizing:border-box"></div>
<div style="position:absolute;left:230px;top:602px;width:5px;height:5px;background:#107c41;border:1px solid #fff;box-sizing:content-box;margin:-1px"></div>
<div style="position:absolute;left:857px;top:227px;width:22px;height:474px;background:#efefef"></div>
<svg style="position:absolute;left:864px;top:232px;" width="9" height="7" viewBox="0 0 9 7"><path d="M0 6.5 L4.5 0.5 L9 6.5 Z" fill="#6b6b6b"/></svg>
<div style="position:absolute;left:864px;top:244px;width:9px;height:344px;background:#6e6e6e;border-radius:4.5px"></div>
<svg style="position:absolute;left:864px;top:692px;" width="9" height="7" viewBox="0 0 9 7"><path d="M0 0.5 L4.5 6.5 L9 0.5 Z" fill="#6b6b6b"/></svg>
<div style="position:absolute;left:1px;top:701px;width:878px;height:28px;background:#efefef"></div>
<svg style="position:absolute;left:29px;top:710px;" width="8" height="13" viewBox="0 0 8 13"><path d="M6 1 L1.5 6.5 L6 12" fill="none" stroke="#9a9a9a" stroke-width="1.1"/></svg>
<svg style="position:absolute;left:61px;top:710px;" width="8" height="13" viewBox="0 0 8 13"><path d="M1.5 1 L6 6.5 L1.5 12" fill="none" stroke="#9a9a9a" stroke-width="1.1"/></svg>
<div style="position:absolute;left:116px;top:701px;width:59px;height:28px;background:#fff;border-radius:0 0 5px 5px;box-shadow:0 1px 1px rgba(0,0,0,0.08)"></div>
<div class="t" style="left:125px;top:707.06px;font-size:13.5px;line-height:15.52px;color:#242424;font-weight:700;font-family:'Liberation Sans', sans-serif;transform:scaleX(0.93);transform-origin:0 0;">Sheet1</div>
<div style="position:absolute;left:125px;top:724px;width:41px;height:2px;background:#107c41;border-radius:1px"></div>
<div style="position:absolute;left:178px;top:706px;width:1px;height:19px;background:#d0d0d0"></div>
<svg style="position:absolute;left:220px;top:710px;" width="13" height="13" viewBox="0 0 13 13"><path d="M6.5 0.5 V12.5 M0.5 6.5 H12.5" stroke="#333" stroke-width="1"/></svg>
<div style="position:absolute;left:530px;top:713.5px;width:2px;height:2px;background:#333"></div>
<div style="position:absolute;left:530px;top:717.3px;width:2px;height:2px;background:#333"></div>
<div style="position:absolute;left:530px;top:721px;width:2px;height:2px;background:#333"></div>
<div style="position:absolute;left:545px;top:703px;width:315px;height:25px;background:#f3f3f3"></div>
<svg style="position:absolute;left:552px;top:712px;" width="7" height="9" viewBox="0 0 7 9"><path d="M7 0 L0 4.5 L7 9 Z" fill="#6b6b6b"/></svg>
<div style="position:absolute;left:564px;top:712px;width:232px;height:9px;background:#6e6e6e;border-radius:4.5px"></div>
<svg style="position:absolute;left:848px;top:712px;" width="7" height="9" viewBox="0 0 7 9"><path d="M0 0 L7 4.5 L0 9 Z" fill="#6b6b6b"/></svg>
<div style="position:absolute;left:1px;top:733px;width:878px;height:1px;background:#fff"></div>
<div style="position:absolute;left:1px;top:734px;width:878px;height:20px;background:#f3f3f3"></div>
<div style="position:absolute;left:0px;top:754px;width:880px;height:2px;background:#2e3b35"></div>
<div class="t" style="left:12.5px;top:739.26px;font-size:11px;line-height:12.65px;color:#242424;font-weight:400;font-family:'Liberation Sans', sans-serif;letter-spacing:0.2px">Ready</div>
<svg style="position:absolute;left:62px;top:737px;" width="16" height="14" viewBox="0 0 16 14">
<rect x="1" y="1" width="13.5" height="12" fill="none" stroke="#222" stroke-width="1.2"/>
<path d="M1 3.5 H14.5" stroke="#222" stroke-width="1.2"/>
<path d="M3.5 6 H6 M3.5 8.3 H6 M3.5 10.6 H6" stroke="#222" stroke-width="1.1"/>
<circle cx="10.5" cy="9" r="3" fill="#f3f3f3" stroke="#222" stroke-width="1.2"/>
<circle cx="10.5" cy="9" r="1.2" fill="#222"/>
</svg>
<svg style="position:absolute;left:94px;top:736px;" width="17" height="17" viewBox="0 0 17 17">
<circle cx="8.5" cy="3" r="2.1" fill="none" stroke="#222" stroke-width="1.1"/>
<path d="M2 2.5 Q3.5 6.8 8.5 6.6 Q13.5 6.8 15 2.5" fill="none" stroke="#222" stroke-width="1.1"/>
<path d="M6.5 7 L6.2 10.5 L4.5 15.5 M10.5 7 L10.6 9.5" fill="none" stroke="#222" stroke-width="1.1"/>
<path d="M9.8 11 L14.8 16 M14.8 11 L9.8 16" stroke="#222" stroke-width="1.1"/>
</svg>
<div class="t" style="left:113.5px;top:739.36px;font-size:11px;line-height:12.65px;color:#242424;font-weight:700;font-family:'Liberation Sans', sans-serif;transform:scaleX(0.955);transform-origin:0 0;">Accessibility: Investigate</div>
<div style="position:absolute;left:568px;top:734px;width:40px;height:19px;background:#e0e0e0"></div>
<svg style="position:absolute;left:580px;top:736px;" width="16" height="16" viewBox="0 0 16 16"><path d="M1.6 1.6 H13.4 V13.4 H1.6 Z M5.5 1.6 V13.4 M9.5 1.6 V13.4 M1.6 5.5 H13.4 M1.6 9.5 H13.4" fill="none" stroke="#1a1a1a" stroke-width="1.1"/></svg>
<svg style="position:absolute;left:620px;top:736px;" width="16" height="16" viewBox="0 0 16 16"><rect x="1.5" y="1.5" width="13" height="12.5" fill="none" stroke="#1a1a1a" stroke-width="1.2"/><rect x="5" y="4.5" width="6" height="7" fill="none" stroke="#1a1a1a" stroke-width="1"/><path d="M6.5 6.5 H9.5 M6.5 8 H9.5 M6.5 9.5 H9.5" stroke="#1a1a1a" stroke-width="0.8"/></svg>
<svg style="position:absolute;left:660px;top:736px;" width="16" height="16" viewBox="0 0 16 16"><rect x="1.5" y="1.5" width="13" height="12.5" fill="none" stroke="#1a1a1a" stroke-width="1.2"/><path d="M5 1.5 V8.5 H9.5 V1.5 M1.5 8.5 H5" fill="none" stroke="#1a1a1a" stroke-width="1.1"/></svg>
<div style="position:absolute;left:695px;top:744px;width:7px;height:1.2px;background:#333"></div>
<div style="position:absolute;left:707px;top:744px;width:100px;height:1px;background:#888"></div>
<div style="position:absolute;left:755px;top:739px;width:5px;height:11px;background:#6e6e6e"></div>
<svg style="position:absolute;left:812px;top:738px;top:740px" width="9" height="9" viewBox="0 0 9 9"><path d="M4.5 0 V9 M0 4.5 H9" stroke="#333" stroke-width="1.1"/></svg>
<div class="t" style="left:834px;top:738.90px;font-size:11.5px;line-height:13.22px;color:#333;font-weight:400;font-family:'Liberation Sans', sans-serif;transform:scaleX(0.92);transform-origin:0 0;">100%</div>
<div style="position:absolute;left:0px;top:0px;width:880px;height:1px;background:#107c41"></div>
<div style="position:absolute;left:0px;top:0px;width:1px;height:756px;background:#107c41"></div>
<div style="position:absolute;left:879px;top:0px;width:1px;height:756px;background:#107c41"></div>
<div style="position:absolute;left:312px;top:328px;width:465px;height:331px;background:#fff"></div>
<svg style="position:absolute;left:312px;top:328px;" width="465" height="331" viewBox="0 0 465 331"><rect x="65.5" y="48.5" width="378" height="226" fill="none" stroke="#c9c9c9" stroke-width="1"/><path d="M65.5 274 V279" stroke="#d0d0d0" stroke-width="1"/><path d="M107.5 274 V279" stroke="#d0d0d0" stroke-width="1"/><path d="M149.5 274 V279" stroke="#d0d0d0" stroke-width="1"/><path d="M191.5 274 V279" stroke="#d0d0d0" stroke-width="1"/><path d="M233.5 274 V279" stroke="#d0d0d0" stroke-width="1"/><path d="M275.5 274 V279" stroke="#d0d0d0" stroke-width="1"/><path d="M317.5 274 V279" stroke="#d0d0d0" stroke-width="1"/><path d="M359.5 274 V279" stroke="#d0d0d0" stroke-width="1"/><path d="M401.5 274 V279" stroke="#d0d0d0" stroke-width="1"/><path d="M443.5 274 V279" stroke="#d0d0d0" stroke-width="1"/><defs><clipPath id="pc"><rect x="65" y="48" width="379" height="227"/></clipPath></defs><polygon clip-path="url(#pc)" points="65.5,274.5 65.50,190.56 107.44,113.07 149.39,125.99 191.33,145.36 233.28,100.16 275.22,106.61 317.17,61.41 359.11,158.27 401.06,113.07 443.00,132.44 443.0,274.5" fill="#80d8a8" stroke="#0db152" stroke-width="3.5" stroke-linejoin="round"/></svg>
<div class="t" style="left:245px;width:600px;text-align:center;top:341.26px;font-size:16px;line-height:18.40px;color:#595959;font-weight:400;font-family:'Liberation Sans', sans-serif;-webkit-text-stroke:0.3px #595959">Chart Title</div>
<div class="t" style="left:-232.2px;width:600px;text-align:right;top:596.49px;font-size:10px;line-height:11.50px;color:#595959;font-weight:400;font-family:'Liberation Sans', sans-serif;-webkit-text-stroke:0.2px #595959">0</div>
<div class="t" style="left:-232.2px;width:600px;text-align:right;top:564.20px;font-size:10px;line-height:11.50px;color:#595959;font-weight:400;font-family:'Liberation Sans', sans-serif;-webkit-text-stroke:0.2px #595959">0.05</div>
<div class="t" style="left:-232.2px;width:600px;text-align:right;top:531.91px;font-size:10px;line-height:11.50px;color:#595959;font-weight:400;font-family:'Liberation Sans', sans-serif;-webkit-text-stroke:0.2px #595959">0.1</div>
<div class="t" style="left:-232.2px;width:600px;text-align:right;top:499.63px;font-size:10px;line-height:11.50px;color:#595959;font-weight:400;font-family:'Liberation Sans', sans-serif;-webkit-text-stroke:0.2px #595959">0.15</div>
<div class="t" style="left:-232.2px;width:600px;text-align:right;top:467.34px;font-size:10px;line-height:11.50px;color:#595959;font-weight:400;font-family:'Liberation Sans', sans-serif;-webkit-text-stroke:0.2px #595959">0.2</div>
<div class="t" style="left:-232.2px;width:600px;text-align:right;top:435.06px;font-size:10px;line-height:11.50px;color:#595959;font-weight:400;font-family:'Liberation Sans', sans-serif;-webkit-text-stroke:0.2px #595959">0.25</div>
<div class="t" style="left:-232.2px;width:600px;text-align:right;top:402.77px;font-size:10px;line-height:11.50px;color:#595959;font-weight:400;font-family:'Liberation Sans', sans-serif;-webkit-text-stroke:0.2px #595959">0.3</div>
<div class="t" style="left:-232.2px;width:600px;text-align:right;top:370.48px;font-size:10px;line-height:11.50px;color:#595959;font-weight:400;font-family:'Liberation Sans', sans-serif;-webkit-text-stroke:0.2px #595959">0.35</div>
<div class="t" style="left:77.5px;width:600px;text-align:center;top:611.79px;font-size:10px;line-height:11.50px;color:#595959;font-weight:400;font-family:'Liberation Sans', sans-serif;-webkit-text-stroke:0.2px #595959">B1</div>
<div class="t" style="left:119.44444444444446px;width:600px;text-align:center;top:611.79px;font-size:10px;line-height:11.50px;color:#595959;font-weight:400;font-family:'Liberation Sans', sans-serif;-webkit-text-stroke:0.2px #595959">B2</div>
<div class="t" style="left:161.3888888888889px;width:600px;text-align:center;top:611.79px;font-size:10px;line-height:11.50px;color:#595959;font-weight:400;font-family:'Liberation Sans', sans-serif;-webkit-text-stroke:0.2px #595959">B3</div>
<div class="t" style="left:203.33333333333331px;width:600px;text-align:center;top:611.79px;font-size:10px;line-height:11.50px;color:#595959;font-weight:400;font-family:'Liberation Sans', sans-serif;-webkit-text-stroke:0.2px #595959">B4</div>
<div class="t" style="left:245.27777777777783px;width:600px;text-align:center;top:611.79px;font-size:10px;line-height:11.50px;color:#595959;font-weight:400;font-family:'Liberation Sans', sans-serif;-webkit-text-stroke:0.2px #595959">B5</div>
<div class="t" style="left:287.2222222222222px;width:600px;text-align:center;top:611.79px;font-size:10px;line-height:11.50px;color:#595959;font-weight:400;font-family:'Liberation Sans', sans-serif;-webkit-text-stroke:0.2px #595959">B6</div>
<div class="t" style="left:329.16666666666663px;width:600px;text-align:center;top:611.79px;font-size:10px;line-height:11.50px;color:#595959;font-weight:400;font-family:'Liberation Sans', sans-serif;-webkit-text-stroke:0.2px #595959">B7</div>
<div class="t" style="left:371.1111111111111px;width:600px;text-align:center;top:611.79px;font-size:10px;line-height:11.50px;color:#595959;font-weight:400;font-family:'Liberation Sans', sans-serif;-webkit-text-stroke:0.2px #595959">B8</div>
<div class="t" style="left:413.05555555555554px;width:600px;text-align:center;top:611.79px;font-size:10px;line-height:11.50px;color:#595959;font-weight:400;font-family:'Liberation Sans', sans-serif;-webkit-text-stroke:0.2px #595959">B9</div>
<div class="t" style="left:455.0px;width:600px;text-align:center;top:611.79px;font-size:10px;line-height:11.50px;color:#595959;font-weight:400;font-family:'Liberation Sans', sans-serif;-webkit-text-stroke:0.2px #595959">B10</div>
<div class="t" style="left:266px;width:600px;text-align:center;top:629.48px;font-size:12.5px;line-height:14.37px;color:#595959;font-weight:400;font-family:'Liberation Sans', sans-serif;-webkit-text-stroke:0.2px #595959">Categories</div>
<div class="t" style="left:337px;top:490px;transform:translate(-50%,-50%) rotate(-90deg);font-size:12px;line-height:14px;color:#595959;-webkit-text-stroke:0.2px #595959;">Values</div>
</body></html>
